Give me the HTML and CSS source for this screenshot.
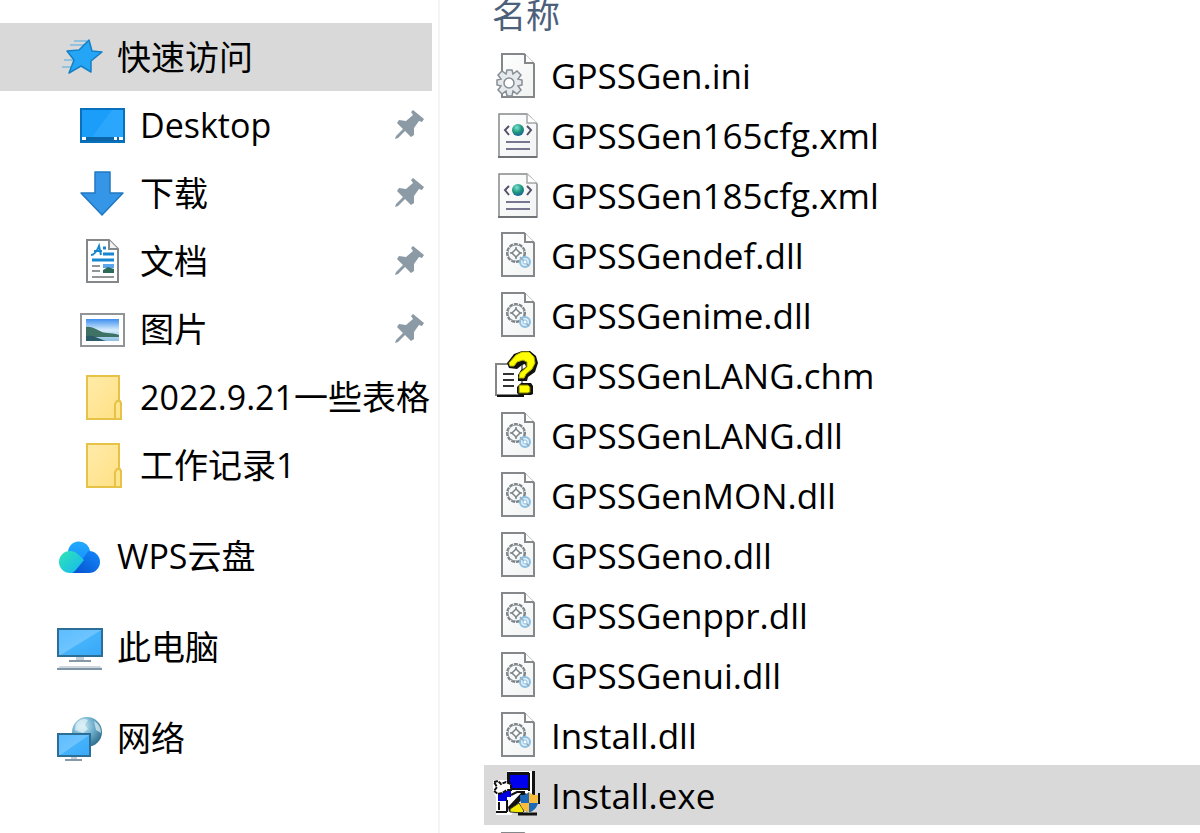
FILE: index.html
```html
<!DOCTYPE html>
<html lang="zh-CN">
<head>
  <meta charset="UTF-8" />
  <meta name="viewport" content="width=device-width, initial-scale=1.0"/>
  <title>文件资源管理器</title>
  <link rel="stylesheet" href="styles.css">
</head>
<body>
  <!-- shared icons -->
  <svg class="sprite" aria-hidden="true">
    <defs>
      <linearGradient id="screen" x1="0" y1="0" x2="1" y2="1">
        <stop offset="0" stop-color="#5ebcff"/><stop offset=".5" stop-color="#6cc4ff"/>
        <stop offset=".52" stop-color="#45b2fb"/><stop offset="1" stop-color="#36a8f8"/>
      </linearGradient>
      <linearGradient id="paper" x1="0" y1="0" x2="1" y2="1">
        <stop offset="0" stop-color="#fff"/><stop offset="1" stop-color="#f1f2f2"/>
      </linearGradient>
      <linearGradient id="folderFill" x1="0" y1="0" x2="1" y2="1">
        <stop offset="0" stop-color="#ffecab"/><stop offset="1" stop-color="#ffdf82"/>
      </linearGradient>
      <linearGradient id="cloudLeft" x1="0" y1="0" x2="1" y2="1">
        <stop offset="0" stop-color="#2ee6b4"/><stop offset="1" stop-color="#17b5f2"/>
      </linearGradient>
      <linearGradient id="cloudTop" x1="0" y1="0" x2="0" y2="1">
        <stop offset="0" stop-color="#22aaff"/><stop offset="1" stop-color="#1488fa"/>
      </linearGradient>
      <linearGradient id="cloudRight" x1="1" y1="0" x2="0" y2="1">
        <stop offset="0" stop-color="#1389fa"/><stop offset="1" stop-color="#0650cf"/>
      </linearGradient>
      <linearGradient id="photo" x1="0" y1="0" x2="0" y2="1">
        <stop offset="0" stop-color="#3d8ff0"/><stop offset=".5" stop-color="#d5ebfb"/><stop offset="1" stop-color="#8fc0e4"/>
      </linearGradient>
      <radialGradient id="globe" cx=".35" cy=".3" r=".75">
        <stop offset="0" stop-color="#cfeaf4"/><stop offset=".5" stop-color="#6fb0cd"/><stop offset="1" stop-color="#2f6d8c"/>
      </radialGradient>
      <radialGradient id="ball" cx=".4" cy=".3" r=".8">
        <stop offset="0" stop-color="#7fe0d8"/><stop offset=".5" stop-color="#1f9a7a"/><stop offset="1" stop-color="#1650a0"/>
      </radialGradient>
    </defs>

    <symbol id="i-star" viewBox="0 0 48 48">
      <path d="M18 8h13M14 12h14M8 27h9M6 34h9M15 23h5" stroke="#7dbbe0" stroke-width="1.5"/>
      <path d="M33 7l3 11 10 1-11 9 0 11-10-6-12 7 5-13-7-9 12-1z" fill="#25a5f5" stroke="#1580c6" stroke-width="1.5" stroke-linejoin="round"/>
    </symbol>

    <symbol id="i-desktop" viewBox="0 0 48 48">
      <rect x="3" y="8" width="43" height="33" fill="#1b9dfa" stroke="#0871bd" stroke-width="2"/>
      <path d="M34 9h11v27H14z" fill="#35adff" opacity=".6"/>
      <path d="M4 36h41v4H4z" fill="#0a66a8"/>
      <path d="M4 36h4v3H4zM36 36h3v3h-3zM41 36h4v3h-4z" fill="#fff"/>
    </symbol>

    <symbol id="i-download" viewBox="0 0 48 48">
      <path d="M17 3h15v21h13L24 46 3 24h14z" fill="#3595e6" stroke="#2078c2" stroke-width="1.5" stroke-linejoin="round"/>
    </symbol>

    <symbol id="i-doc" viewBox="0 0 48 48">
      <path d="M9 3h22l9 9v33H9z" fill="#fff" stroke="#85888a" stroke-width="2"/>
      <path d="M31 3v9h9" fill="#f4f4f4" stroke="#85888a" stroke-width="2"/>
      <path d="M13 18c4 0 6-4 8-9l2 9M16 14h8" fill="none" stroke="#1686d0" stroke-width="2"/>
      <path d="M25 11h3M25 17h11M14 23h22" stroke="#1686d0" stroke-width="3"/>
      <path d="M14 29h8M14 34h8M14 40h22" stroke="#929597" stroke-width="2"/>
      <path d="M25 27h11v4H25z" fill="#5ba7ee"/>
      <path d="M25 33l5-3 6 2v4H25z" fill="#2d6a5b"/>
    </symbol>

    <symbol id="i-picture" viewBox="0 0 48 48">
      <rect x="3" y="9" width="43" height="32" fill="#fff" stroke="#929597" stroke-width="2"/>
      <rect x="8" y="14" width="33" height="22" fill="url(#photo)"/>
      <path d="M8 22c6-1 9 2 14 4 5 3 10 1 19 4v2H8z" fill="#3d7264"/>
      <path d="M8 31c9-1 12 3 20 5H8z" fill="#2b5a68"/>
    </symbol>

    <symbol id="i-folder" viewBox="0 0 48 48">
      <path d="M9 3h32v27h2v16H9z" fill="url(#folderFill)" stroke="#e6c246" stroke-width="2"/>
      <path d="M37 46V31l2-3h3l1 3v15z" fill="#ffe48f" stroke="#e6c246" stroke-width="2"/>
    </symbol>

    <symbol id="i-cloud" viewBox="0 0 48 48">
      <path d="M12 21a11 11 0 0 1 22-1l1 10-11 6-12-8z" fill="url(#cloudTop)"/>
      <path d="M33 19a11 11 0 0 1 0 22H15l14-17c1-2 2-4 4-5z" fill="url(#cloudRight)"/>
      <path d="M14 19c6 0 9 4 14 9l-9 11c-2 2-3 2-5 2a11 11 0 0 1 0-22z" fill="url(#cloudLeft)"/>
    </symbol>

    <symbol id="i-pc" viewBox="0 0 48 48">
      <rect x="2" y="6" width="44" height="27" fill="url(#screen)" stroke="#2d6e96" stroke-width="2"/>
      <path d="M20 34h8v3h-8z" fill="#c4ced6"/>
      <path d="M13 38h22" stroke="#8798a6" stroke-width="2"/>
      <path d="M4 43h40l2 2H2z" fill="#cfd7dd"/>
      <path d="M1 46h45" stroke="#8096a8" stroke-width="2"/>
    </symbol>

    <symbol id="i-network" viewBox="0 0 48 48">
      <circle cx="31" cy="18" r="15" fill="url(#globe)"/>
      <path d="M20 10c5-7 10-5 12-4l-3 5 3 4-5 4-8-3zM38 7c5 3 7 7 7 12l-5-3z" fill="#e3f4f8" opacity=".7"/>
      <rect x="2" y="20" width="32" height="22" fill="url(#screen)" stroke="#2d6e96" stroke-width="2"/>
      <path d="M15 43h6v2h-6z" fill="#c4ced6"/>
      <path d="M9 46h17" stroke="#8798a6" stroke-width="2"/>
    </symbol>

    <symbol id="i-pin" viewBox="0 0 32 32">
      <path d="M20 1l11 9-2 3-3-1-5 7v7l-3 2-6-6-7 7-3 1 1-3 7-7-6-6 2-3 7 1 7-6-2-3z" fill="#8b9aa5"/>
    </symbol>

    <symbol id="i-ini" viewBox="0 0 48 48">
      <path d="M9 3h22l10 10v33H9z" fill="url(#paper)" stroke="#85888a" stroke-width="2"/>
      <path d="M32 3v9h9" fill="#fff" stroke="#85888a" stroke-width="2"/>
      <path d="M14 19h5l1 4 4-3 4 4-3 4 4 1v5l-4 1 3 4-4 4-4-3-1 5h-5l-1-5-4 3-4-4 3-4-4-1v-5l4-1-3-4 4-4 4 3z" fill="#e6eaec" stroke="#858e94" stroke-width="1.5"/>
      <circle cx="16" cy="32" r="5" fill="#fff" stroke="#858e94" stroke-width="1.5"/>
    </symbol>

    <symbol id="i-xml" viewBox="0 0 48 48">
      <path d="M6 3h28l10 10v33H6z" fill="url(#paper)" stroke="#85888a" stroke-width="1.5"/>
      <path d="M34 3v9h10" fill="#fff" stroke="#a3a6a8" stroke-width="1.5"/>
      <path d="M5 46h39" stroke="#707376" stroke-width="2"/>
      <path d="M16 15l-4 4 4 5M34 15l4 4-4 5" fill="none" stroke="#55506a" stroke-width="2"/>
      <circle cx="25" cy="19" r="6" fill="url(#ball)"/>
      <path d="M13 31h24M13 38h24" stroke="#79748f" stroke-width="2"/>
    </symbol>

    <symbol id="i-dll" viewBox="0 0 48 48">
      <path d="M9 2h22l10 10v33H9z" fill="url(#paper)" stroke="#85888a" stroke-width="2"/>
      <path d="M32 2v9h9" fill="#fff" stroke="#85888a" stroke-width="2"/>
      <circle cx="23" cy="22" r="9" fill="none" stroke="#7b8388" stroke-width="2" stroke-dasharray="4 1"/>
      <circle cx="23" cy="22" r="8" fill="#f6f8f8" stroke="#8f969a" stroke-width="1"/>
      <path d="M23 16v3M23 25v3M17 22h3M26 22h3" stroke="#7b8388" stroke-width="1.5"/>
      <path d="M23 18l4 4-4 4-4-4z" fill="#fff" stroke="#7b8388" stroke-width="1.5"/>
      <circle cx="32" cy="31" r="5" fill="#d9edf9" stroke="#8fc0e0" stroke-width="2"/>
      <path d="M27 26l9 9" stroke="#8aabc2" stroke-width="1.5"/>
      <circle cx="32" cy="31" r="2" fill="#fff" stroke="#8fc0e0"/>
    </symbol>

    <symbol id="i-chm" viewBox="0 0 48 48">
      <path d="M3 13h26v31H3z" fill="#fff" stroke="#858585" stroke-width="2"/>
      <path d="M4 45h26V32" fill="none" stroke="#111" stroke-width="2"/>
      <path d="M10 23h11M10 29h11M10 35h11" stroke="#333" stroke-width="2"/>
      <path d="M16 17l-2-5 7-9 8-3h8l6 5 2 7-3 9-7 5-1 4h-9v-6l3-5 5-3-1-3-3 1-5 4z" fill="#111"/>
      <path d="M17 15l-1-3 7-8 6-3h7l5 5 1 6-3 6-6 5-2 4h-5l1-5 7-6v-5l-4-2-6 2-3 4z" fill="#ff0" stroke="#b5b500"/>
      <path d="M28 32h10l2 3v8l-2 1H26l-2-2v-6z" fill="#111"/>
      <path d="M26 34h9l2 2v5l-2 1h-9z" fill="#ff0" stroke="#737300"/>
    </symbol>

    <symbol id="i-exe" viewBox="0 0 48 48">
      <path d="M14 0h28v30H30L18 44H3V26L0 20V9h14z" fill="#fff"/>
      <path d="M14 1h22v4H18v9h-4z" fill="#111"/>
      <path d="M17 4h18v13H17z" fill="#00e"/>
      <path d="M35 2h2v18h-2zM39 0h3v26h-3zM17 17h19v2H17z" fill="#111"/>
      <path d="M5 20h13v6h-4v4H5z" fill="#0000df"/>
      <path d="M1 11l4-1 3 3 5-2 5 2v6h-4l-5 3-4 1-4-3 3-4z" fill="#fff" stroke="#111" stroke-width="2" stroke-dasharray="4 1"/>
      <path d="M6 31v8M3 41h11M14 29v12M18 24l6-3h8" fill="none" stroke="#111" stroke-width="2"/>
      <path d="M15 36l14-15 5 2-15 16-3 2z" fill="#111"/>
      <path d="M17 38l9-6 5 8-2 2-12-1z" fill="#f4e800" stroke="#333"/>
      <path d="M25 43h19" stroke="#111" stroke-width="3"/>
      <path d="M36 21c3 3 6 3 9 3 0 9-2 14-9 18z" fill="#f8bc3c"/>
      <path d="M36 21c-3 3-6 3-9 3 0 9 2 14 9 18z" fill="#1f68b8"/>
      <path d="M27 32h9v10c-6-3-8-6-9-10z" fill="#f8bc3c"/>
      <path d="M36 32h9c-1 4-3 7-9 10z" fill="#1f68b8"/>
      <path d="M46 22v11" stroke="#111" stroke-width="2"/>
    </symbol>
  </svg>

  <div class="explorer">
    <nav class="sidebar" aria-label="导航窗格">
      <ul class="tree">
        <li><a class="node selected" href="#"><svg class="icon"><use href="#i-star"/></svg><span class="label">快速访问</span></a></li>
        <li><a class="node child" href="#"><svg class="icon"><use href="#i-desktop"/></svg><span class="label">Desktop</span><svg class="pin"><use href="#i-pin"/></svg></a></li>
        <li><a class="node child" href="#"><svg class="icon"><use href="#i-download"/></svg><span class="label">下载</span><svg class="pin"><use href="#i-pin"/></svg></a></li>
        <li><a class="node child" href="#"><svg class="icon"><use href="#i-doc"/></svg><span class="label">文档</span><svg class="pin"><use href="#i-pin"/></svg></a></li>
        <li><a class="node child" href="#"><svg class="icon"><use href="#i-picture"/></svg><span class="label">图片</span><svg class="pin"><use href="#i-pin"/></svg></a></li>
        <li><a class="node child" href="#"><svg class="icon"><use href="#i-folder"/></svg><span class="label">2022.9.21一些表格</span></a></li>
        <li><a class="node child" href="#"><svg class="icon"><use href="#i-folder"/></svg><span class="label">工作记录1</span></a></li>
        <li class="group"><a class="node" href="#"><svg class="icon"><use href="#i-cloud"/></svg><span class="label">WPS云盘</span></a></li>
        <li class="group"><a class="node" href="#"><svg class="icon"><use href="#i-pc"/></svg><span class="label">此电脑</span></a></li>
        <li class="group"><a class="node" href="#"><svg class="icon"><use href="#i-network"/></svg><span class="label">网络</span></a></li>
      </ul>
    </nav>

    <main class="files">
      <button class="column-name" type="button">名称</button>
      <ul class="file-list">
        <li><a class="file" href="#"><svg class="icon"><use href="#i-ini"/></svg><span class="label">GPSSGen.ini</span></a></li>
        <li><a class="file" href="#"><svg class="icon"><use href="#i-xml"/></svg><span class="label">GPSSGen165cfg.xml</span></a></li>
        <li><a class="file" href="#"><svg class="icon"><use href="#i-xml"/></svg><span class="label">GPSSGen185cfg.xml</span></a></li>
        <li><a class="file" href="#"><svg class="icon"><use href="#i-dll"/></svg><span class="label">GPSSGendef.dll</span></a></li>
        <li><a class="file" href="#"><svg class="icon"><use href="#i-dll"/></svg><span class="label">GPSSGenime.dll</span></a></li>
        <li><a class="file" href="#"><svg class="icon"><use href="#i-chm"/></svg><span class="label">GPSSGenLANG.chm</span></a></li>
        <li><a class="file" href="#"><svg class="icon"><use href="#i-dll"/></svg><span class="label">GPSSGenLANG.dll</span></a></li>
        <li><a class="file" href="#"><svg class="icon"><use href="#i-dll"/></svg><span class="label">GPSSGenMON.dll</span></a></li>
        <li><a class="file" href="#"><svg class="icon"><use href="#i-dll"/></svg><span class="label">GPSSGeno.dll</span></a></li>
        <li><a class="file" href="#"><svg class="icon"><use href="#i-dll"/></svg><span class="label">GPSSGenppr.dll</span></a></li>
        <li><a class="file" href="#"><svg class="icon"><use href="#i-dll"/></svg><span class="label">GPSSGenui.dll</span></a></li>
        <li><a class="file" href="#"><svg class="icon"><use href="#i-dll"/></svg><span class="label">Install.dll</span></a></li>
        <li><a class="file selected" href="#"><svg class="icon"><use href="#i-exe"/></svg><span class="label">Install.exe</span></a></li>
        <li><a class="file" href="#" aria-label="文件"><svg class="icon"><use href="#i-dll"/></svg></a></li>
      </ul>
    </main>
  </div>
</body>
</html>
```

FILE: styles.css
```css
* {
  box-sizing: border-box;
}

body {
  margin: 0;
  background: #fff;
  color: #000;
  font-family: "Open Sans", "Noto Sans CJK SC", sans-serif;
  font-size: 34px;
  line-height: 48px;
}

ul {
  list-style: none;
  margin: 0;
  padding: 0;
}

a {
  color: inherit;
  text-decoration: none;
}

/* stays rendered so the gradients keep working */
.sprite {
  position: absolute;
  width: 0;
  height: 0;
}

.explorer {
  display: flex;
  height: 100vh;
  overflow: hidden;
}

/* navigation pane */
.sidebar {
  flex: 0 0 440px;
  padding: 23px 6px 0 0;
  border-right: 2px solid #f4f4f4;
}

.node {
  display: flex;
  align-items: center;
  gap: 13px;
  height: 68px;
  padding-left: 56px;
}

.node.child {
  gap: 14px;
  padding-left: 78px;
}

.group {
  margin-top: 23px;
}

.selected {
  background: #d9d9d9;
}

.icon {
  flex: none;
  width: 48px;
  height: 48px;
}

.label {
  flex: 1;
  overflow: hidden;
  white-space: nowrap;
}

.pin {
  flex: none;
  width: 32px;
  height: 32px;
  margin-right: 7px;
}

/* file list */
.files {
  flex: 1;
  min-width: 0;
  padding-left: 44px;
}

.column-name {
  display: block;
  height: 45px;
  padding: 0 8px 15px;
  border: none;
  background: none;
  color: #4c607a;
  font: inherit;
  line-height: 30px;
}

.file {
  display: flex;
  align-items: center;
  gap: 10px;
  height: 60px;
  padding-left: 9px;
  font-size: 35px;
}

.file .label {
  padding-top: 2px;
}
```
